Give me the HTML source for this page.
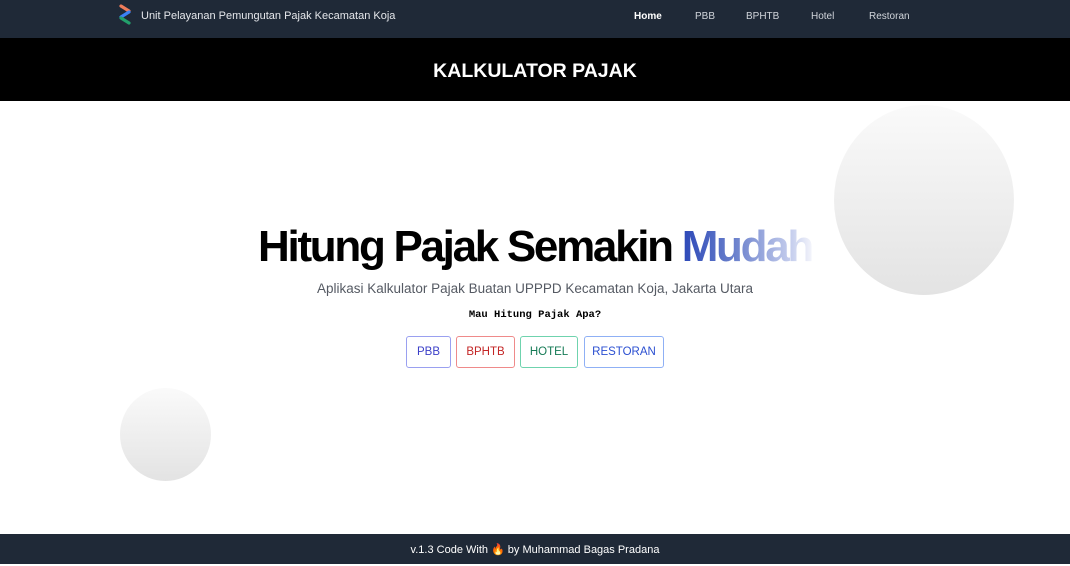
<!DOCTYPE html>
<html><head><meta charset="utf-8"><style>
*{margin:0;padding:0;box-sizing:border-box}
body{width:1070px;height:564px;overflow:hidden;background:#fff;font-family:"Liberation Sans",sans-serif;position:relative}
.nav{height:38px;background:#1f2937;position:relative;color:#fff}
.nav .brand{position:absolute;left:141px;top:10px;font-size:11px;color:#e5e7eb}
.nav .links a{position:absolute;top:11px;font-size:10px;color:#d1d5db;text-decoration:none}
.hdr{position:absolute;top:38px;left:0;width:1070px;height:63px;background:#000;color:#fff;font-weight:bold;font-size:19.5px;text-align:center;line-height:66px}
.circ{position:absolute;border-radius:50%;background:linear-gradient(#fafafa,#e3e3e3)}
h1{position:absolute;top:222px;left:0;width:1070px;text-align:center;font-size:44px;font-weight:bold;letter-spacing:-2.3px;color:#000}
h1 span{background:linear-gradient(90deg,#2c48b8 0%,#6a80cc 40%,#c8d0ee 85%,#f4f5fb 100%);-webkit-background-clip:text;background-clip:text;color:transparent}
.sub{position:absolute;top:281px;width:1070px;text-align:center;font-size:13.5px;color:#555a63}
.q{position:absolute;top:309px;width:1070px;text-align:center;font-family:"Liberation Mono",monospace;font-weight:bold;font-size:10.5px}
.btn{position:absolute;top:336px;height:32px;border:1px solid;border-radius:3px;font-size:11.5px;text-align:center;line-height:30px}
.foot{position:absolute;top:534px;left:0;width:1070px;height:30px;background:#1f2937;color:#fff;font-size:11px;text-align:center;line-height:32px}
</style></head><body>
<div class="nav">
<svg style="position:absolute;left:118px;top:4px" width="14" height="22" viewBox="0 0 14 22"><path d="M3 2 L11 7" stroke="#f07c5a" stroke-width="3.2" stroke-linecap="round"/><path d="M11 8 L3 13" stroke="#3b82f6" stroke-width="3.2" stroke-linecap="round"/><path d="M3 14 L11 19" stroke="#22a06b" stroke-width="3.2" stroke-linecap="round"/></svg>
<div class="brand">Unit Pelayanan Pemungutan Pajak Kecamatan Koja</div>
<div class="links"><a style="left:634px;color:#fff;font-weight:bold">Home</a><a style="left:695px">PBB</a><a style="left:746px">BPHTB</a><a style="left:811px">Hotel</a><a style="left:869px">Restoran</a></div>
</div>
<div class="hdr">KALKULATOR PAJAK</div>
<div class="circ" style="left:834px;top:105px;width:180px;height:190px"></div>
<div class="circ" style="left:120px;top:388px;width:91px;height:93px"></div>
<h1>Hitung Pajak Semakin <span>Mudah</span></h1>
<div class="sub">Aplikasi Kalkulator Pajak Buatan UPPPD Kecamatan Koja, Jakarta Utara</div>
<div class="q">Mau Hitung Pajak Apa?</div>
<div class="btn" style="left:406px;width:45px;border-color:#9aa0f0;color:#3b3fc8">PBB</div>
<div class="btn" style="left:456px;width:59px;border-color:#ef8a8a;color:#c32525">BPHTB</div>
<div class="btn" style="left:520px;width:58px;border-color:#6fd3ae;color:#157a55">HOTEL</div>
<div class="btn" style="left:584px;width:80px;border-color:#8fb0f5;color:#2b4fd1">RESTORAN</div>
<div class="foot">v.1.3 Code With 🔥 by Muhammad Bagas Pradana</div>
</body></html>
